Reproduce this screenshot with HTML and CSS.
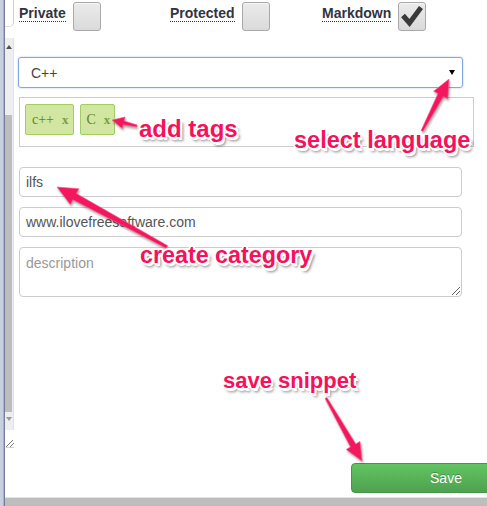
FILE: index.html
```html
<!DOCTYPE html>
<html>
<head>
<meta charset="utf-8">
<link rel="stylesheet" href="styles.css">
</head>
<body>
<div class="page">
  <div class="rail"></div>
  <div class="frame">
    <div class="upper">
      <div class="side">
        <div class="side-cap"></div>
        <div class="scroll">
          <div class="scroll-up"></div>
          <div class="scroll-thumb"></div>
          <div class="scroll-down"></div>
        </div>
        <div class="side-grip"></div>
      </div>
      <main class="main">
        <div class="opts">
          <div class="opt"><span class="opt-label">Private</span><span class="check"></span></div>
          <div class="opt"><span class="opt-label">Protected</span><span class="check"></span></div>
          <div class="opt"><span class="opt-label">Markdown</span><span class="check"><svg class="tick" width="28" height="29" viewBox="0 0 28 29"><polyline points="5,13.5 11.5,21 23,5.5" /></svg></span></div>
        </div>
        <div class="select"><span>C++</span><span class="caret"></span></div>
        <div class="tags">
          <span class="tag"><span>c++</span><span class="x">x</span></span>
          <span class="tag"><span>C</span><span class="x">x</span></span>
        </div>
        <div class="field">ilfs</div>
        <div class="field">www.ilovefreesoftware.com</div>
        <div class="field area"><span class="placeholder">description</span><span class="grip"></span></div>
        <button class="save">Save</button>
      </main>
    </div>
    <div class="hbar"></div>
  </div>

  <svg class="arrows" width="487" height="506" viewBox="0 0 487 506">
    <polygon points="137.2,125 124.2,120.9 125.1,117 112,120 122.3,128.6 123.2,124.7 136.8,127" />
    <polygon points="422.9,131.5 443.4,96.4 447.8,98.7 449,79 433.6,91.3 438,93.6 421.1,130.5" />
    <polygon points="167.7,245.7 76.3,193.5 78.9,188.7 57,187 70.3,204.5 72.9,199.7 166.3,248.3" />
    <polygon points="325.1,398.5 350.5,446.9 346.2,449.4 362,461 360,441.4 355.7,443.9 326.9,397.5" />
  </svg>
  <div class="note note-tags">add tags</div>
  <div class="note note-lang">select language</div>
  <div class="note note-cat">create category</div>
  <div class="note note-save">save snippet</div>
</div>
</body>
</html>
```

FILE: styles.css
```css
* { box-sizing: border-box; }
html, body { margin: 0; padding: 0; background: #fff; }
body { font-family: "Liberation Sans", Arial, sans-serif; }

.page {
  position: relative;
  display: flex;
  width: 487px;
  height: 506px;
  overflow: hidden;
  background: #fff;
}

.rail {
  width: 5px;
  flex: none;
  background: linear-gradient(to right, #c6d0e0 0, #c6d0e0 3px, #a6b2c6 3px, #a6b2c6 4px, #74809a 4px, #74809a 5px);
}

.frame {
  flex: 1;
  display: flex;
  flex-direction: column;
  min-width: 0;
}

.upper {
  flex: 1;
  display: flex;
  min-height: 0;
}

.side {
  width: 9px;
  flex: none;
  display: flex;
  flex-direction: column;
}
.side-cap {
  height: 27px;
  border-right: 1px solid #cfcfcf;
  border-bottom: 1px solid #dcdcdc;
  border-bottom-right-radius: 5px;
  background: #fff;
}
.scroll {
  margin-top: 11px;
  height: 392px;
  background: #eeeeee;
  border-right: 1px solid #e2e2e2;
  display: flex;
  flex-direction: column;
}
.scroll-up {
  margin-top: 7px;
  margin-left: 1px;
  width: 0;
  height: 0;
  border-left: 3px solid transparent;
  border-right: 3px solid transparent;
  border-bottom: 4px solid #505050;
}
.scroll-thumb {
  margin-top: 66px;
  width: 7px;
  height: 297px;
  background: #bdbdbd;
}
.scroll-down {
  margin-top: 5px;
  margin-left: 1px;
  width: 0;
  height: 0;
  border-left: 3px solid transparent;
  border-right: 3px solid transparent;
  border-top: 4px solid #9a9a9a;
}
.side-grip {
  margin-top: 10px;
  margin-left: 1px;
  width: 8px;
  height: 8px;
  border-bottom: 1px solid #d0d0d0;
  background: linear-gradient(135deg, transparent 0, transparent 45%, #777 45%, #777 52%, transparent 52%, transparent 70%, #777 70%, #777 77%, transparent 77%);
}

.hbar {
  height: 9px;
  flex: none;
  background: #bdbdbd;
  border-top: 1px solid #e4e4e4;
}

.main {
  flex: 1;
  min-width: 0;
  padding-left: 5px;
  overflow: hidden;
  background: #fff;
  color: #444;
}

.opts {
  display: grid;
  grid-template-columns: 151px 152px 152px;
  padding-top: 2px;
}
.opt {
  display: flex;
  align-items: flex-start;
  gap: 7px;
}
.opt-label {
  margin-top: 3px;
  font-size: 14px;
  line-height: 16px;
  font-weight: bold;
  color: #33333f;
  border-bottom: 1px dotted #2020e0;
}
.check {
  width: 28px;
  height: 29px;
  border: 1px solid #a9a9a9;
  border-radius: 3px;
  background: linear-gradient(#ebebeb, #dadada);
  box-shadow: inset 0 1px 0 #f6f6f6;
  position: relative;
}
.tick {
  position: absolute;
  left: -1px;
  top: -1px;
}
.tick polyline {
  fill: none;
  stroke: #3a3a3a;
  stroke-width: 5;
  stroke-linejoin: miter;
}

.select {
  margin-top: 26px;
  margin-left: -1px;
  width: 445px;
  height: 31px;
  border: 1px solid #7ea8e2;
  border-radius: 3px;
  box-shadow: 0 0 2px #a9c8f0;
  display: flex;
  align-items: center;
  justify-content: space-between;
  padding: 0 7px 0 12px;
  font-size: 14px;
  color: #444;
}
.caret {
  width: 0;
  height: 0;
  border-left: 3px solid transparent;
  border-right: 3px solid transparent;
  border-top: 5px solid #000;
  margin-top: -1px;
}

.tags {
  margin-top: 9px;
  width: 455px;
  height: 50px;
  border: 1px solid #cccccc;
  padding: 6px 5px;
  display: flex;
  gap: 6px;
}
.tag {
  height: 31px;
  display: flex;
  align-items: center;
  gap: 8px;
  padding: 0 4px 0 6px;
  background: #d1e7a1;
  border: 1px solid #a3cc62;
  border-radius: 2px;
  font-family: "Liberation Serif", "Times New Roman", serif;
  font-size: 14px;
  color: #62822a;
}
.tag .x {
  color: #7c9c3e;
  font-weight: bold;
  font-size: 13px;
}

.field {
  margin-top: 10px;
  width: 443px;
  height: 30px;
  border: 1px solid #cccccc;
  border-radius: 4px;
  padding: 0 6px;
  display: flex;
  align-items: center;
  font-size: 14px;
  line-height: 16px;
  color: #555;
}
.tags + .field { margin-top: 20px; }
.field.area {
  height: 50px;
  align-items: flex-start;
  padding-top: 7px;
  position: relative;
}
.placeholder { color: #999; }
.grip {
  position: absolute;
  right: 1px;
  bottom: 1px;
  width: 8px;
  height: 8px;
  background: linear-gradient(135deg, transparent 0, transparent 45%, #666 45%, #666 52%, transparent 52%, transparent 70%, #666 70%, #666 77%, transparent 77%);
}

.save {
  display: block;
  margin-top: 166px;
  margin-left: 332px;
  width: 190px;
  height: 30px;
  border: 1px solid #48944a;
  border-radius: 4px;
  background: linear-gradient(#62c462, #4fa24f);
  color: #fff;
  font-family: "Liberation Sans", Arial, sans-serif;
  font-size: 14px;
  text-shadow: 0 -1px 0 rgba(0,0,0,0.25);
  padding: 0;
}

.arrows {
  position: absolute;
  left: 0;
  top: 0;
  pointer-events: none;
  filter: drop-shadow(1px 2px 1px rgba(0,0,0,0.35));
}
.arrows polygon {
  fill: #f3175f;
  stroke: #ff5c8c;
  stroke-width: 0.6;
}

.note {
  position: absolute;
  font-family: "Liberation Sans", Arial, sans-serif;
  font-weight: bold;
  font-size: 24px;
  line-height: 28px;
  color: #f5115b;
  white-space: nowrap;
  text-shadow:
    -1px -1px 0 #fff, 1px -1px 0 #fff, -1px 1px 0 #fff, 1px 1px 0 #fff,
    0 -2px 0 #fff, 0 2px 0 #fff, -2px 0 0 #fff, 2px 0 0 #fff,
    2px 3px 0 #fff,
    3px 4px 3px rgba(0,0,0,0.5);
}
.note-tags { left: 139px; top: 115px; }
.note-lang { left: 294px; top: 126px; font-size: 23.5px; }
.note-cat { left: 140px; top: 241px; font-size: 23.3px; }
.note-save { left: 223px; top: 367px; font-size: 22px; }
```
